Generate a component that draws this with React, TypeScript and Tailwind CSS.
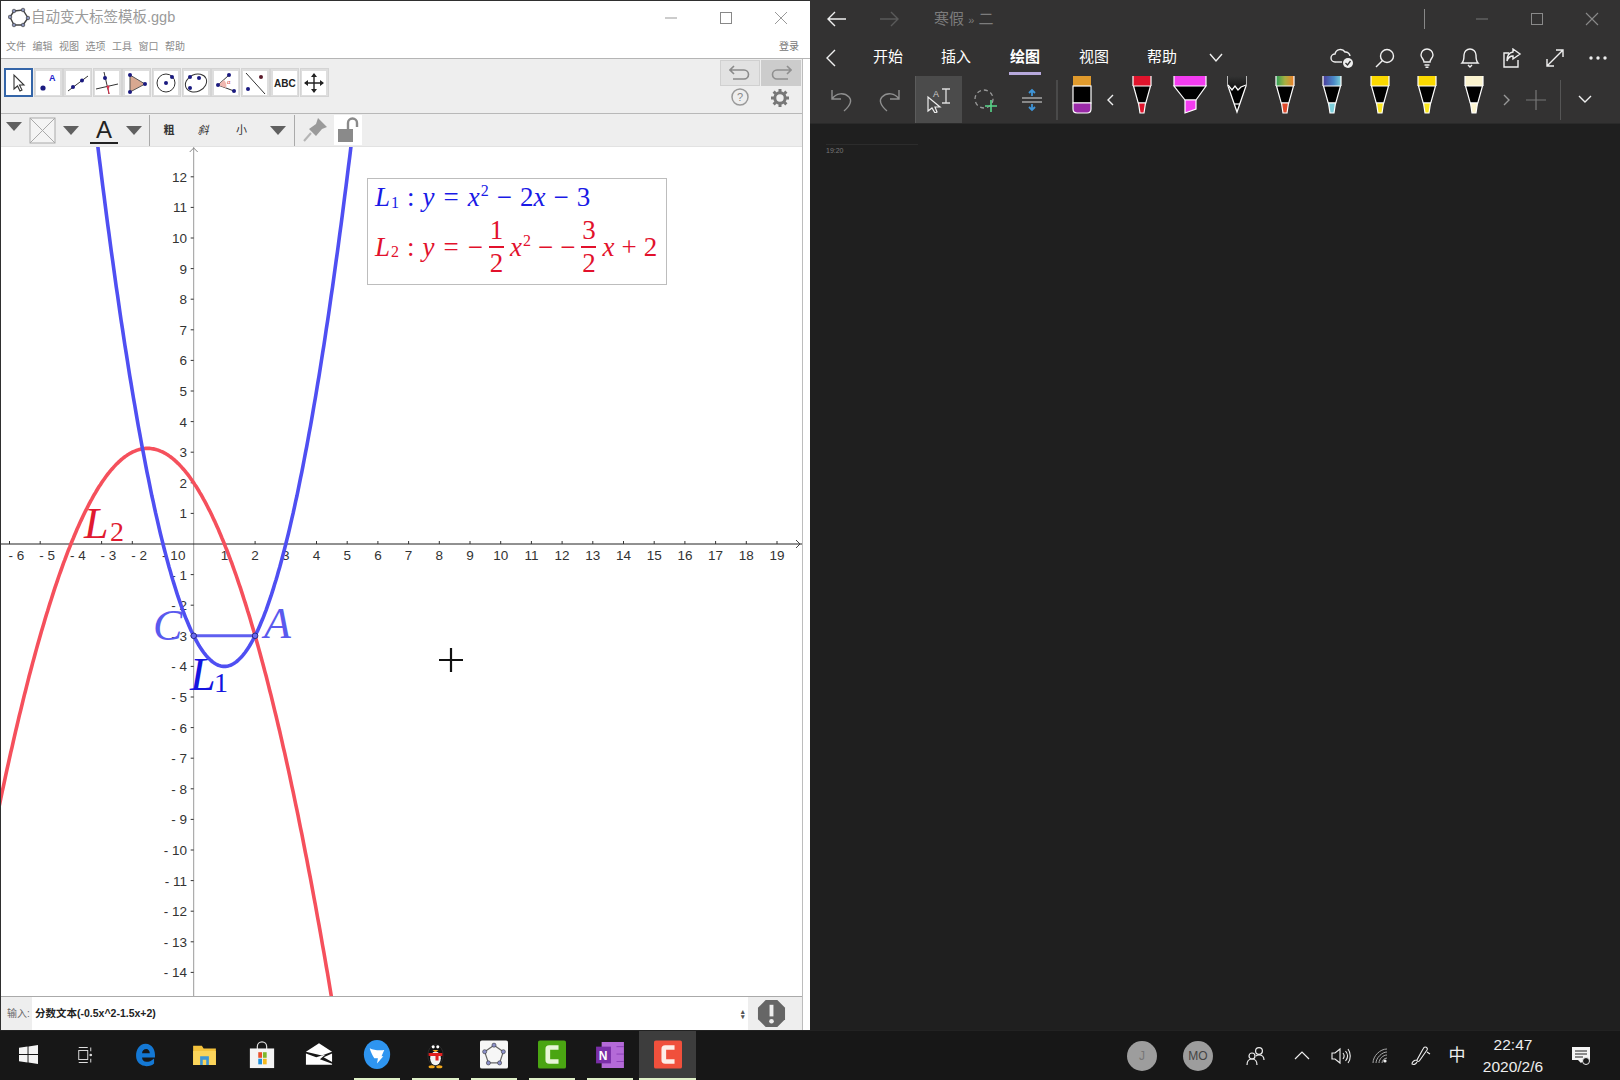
import React from "react";

const CJK = '"Liberation Sans","Noto Sans CJK SC",sans-serif';
const OX = 193.7, OY = 544, UX = 30.7, UY = 30.6;
const px = (x: number) => OX + x * UX;
const py = (y: number) => OY - y * UY;

function curve(f: (x: number) => number) {
  let d = "";
  for (let x = -6.4; x <= 19.8; x += 0.04) {
    const y = f(x);
    if (y > 14.5 || y < -15.5) { if (d && !d.endsWith("|")) d += "|"; continue; }
    d += (d === "" || d.endsWith("|") ? "M" : "L") + px(x).toFixed(1) + " " + py(y).toFixed(1) + " ";
  }
  return d.replace(/\|/g, "");
}

function Graph() {
  const xs: number[] = [];
  for (let i = -6; i <= 19; i++) if (i !== 0) xs.push(i);
  const ys: number[] = [];
  for (let i = -14; i <= 12; i++) if (i !== 0) ys.push(i);
  return (
    <svg viewBox="1 147 801 850" className="w-[801px] h-[850px] block" style={{ fontFamily: '"Liberation Sans",sans-serif' }}>
      <line x1={OX} y1="147" x2={OX} y2="997" stroke="#9a9a9a" />
      <line x1="0" y1={OY} x2="802" y2={OY} stroke="#222" />
      <path d={`M${OX - 4} 152 L${OX} 148 L${OX + 4} 152`} fill="none" stroke="#888" />
      <path d={`M796 ${OY - 4} L800 ${OY} L796 ${OY + 4}`} fill="none" stroke="#444" />
      {xs.map((i) => (
        <g key={i}>
          <line x1={px(i)} x2={px(i)} y1={OY - 3} y2={OY} stroke="#333" />
          {i < 0 ? (
            <text x={px(i) - 1} y={560} fontSize="13.5" fill="#333" xmlSpace="preserve">{`- ${-i}`}</text>
          ) : (
            <text x={px(i)} y={560} fontSize="13.5" fill="#333" textAnchor="middle">{i}</text>
          )}
        </g>
      ))}
      <text x="178" y="560" fontSize="13.5" fill="#333">0</text>
      {ys.map((i) => (
        <g key={i}>
          <line x1={OX - 3} x2={OX} y1={py(i)} y2={py(i)} stroke="#333" />
          <text x="187" y={py(i) + 5} fontSize="13.5" fill="#333" textAnchor="end" xmlSpace="preserve">{i < 0 ? `- ${-i}` : i}</text>
        </g>
      ))}
      <path d={curve((x) => -0.5 * x * x - 1.5 * x + 2)} fill="none" stroke="#f5505c" strokeWidth="3.6" />
      <path d={curve((x) => x * x - 2 * x - 3)} fill="none" stroke="#4f4ff2" strokeWidth="3.6" />
      <line x1={px(0)} x2={px(2)} y1={py(-3)} y2={py(-3)} stroke="#5f5ff0" strokeWidth="3" />
      <circle cx={px(0)} cy={py(-3)} r="2.8" fill="#6a6af0" stroke="#2a2a80" />
      <circle cx={px(2)} cy={py(-3)} r="2.8" fill="#6a6af0" stroke="#2a2a80" />
      <g style={{ fontFamily: '"Liberation Serif",serif' }}>
        <text x="153" y="640" fontSize="44" fontStyle="italic" fill="#5a5aee">C</text>
        <text x="264" y="638" fontSize="44" fontStyle="italic" fill="#5a5aee">A</text>
        <text x="190" y="690" fontSize="46" fontStyle="italic" fill="#1414e0">L</text>
        <text x="214" y="692" fontSize="28" fill="#1414e0">1</text>
        <text x="84" y="538" fontSize="44" fontStyle="italic" fill="#e01a30">L</text>
        <text x="110" y="541" fontSize="28" fill="#e01a30">2</text>
      </g>
      <path d="M439 660 H463 M451 648 V672" stroke="#111" strokeWidth="2.2" />
    </svg>
  );
}

function Frac({ n, c }: { n: string; c: string }) {
  return (
    <span className="inline-flex flex-col items-center mx-[5px] w-[17px] not-italic leading-[31px]">
      <span>{n}</span>
      <span className="block w-[15px] h-[1.5px]" style={{ backgroundColor: c }} />
      <span>2</span>
    </span>
  );
}

function Formula() {
  return (
    <div
      className="absolute left-[366px] top-[178px] w-[300px] h-[107px] border border-[#bdbdbd] bg-white pl-[7px] text-[27px] whitespace-nowrap"
      style={{ fontFamily: '"Liberation Serif",serif' }}
    >
      <div className="text-[#1a1ae6] flex items-center h-[37px]">
        <i>L</i><span className="text-[16px] mt-[10px] ml-[1px]">1</span>
        <span className="mx-[8px]">:</span><i>y</i><span className="mx-[9px]">=</span><i>x</i>
        <span className="text-[16px] -mt-[13px] ml-[1px]">2</span>
        <span className="mx-[8px]">−</span>2<i>x</i><span className="mx-[8px]">−</span>3
      </div>
      <div className="text-[#e2112c] flex items-center h-[62px]">
        <i>L</i><span className="text-[16px] mt-[10px] ml-[1px]">2</span>
        <span className="mx-[8px]">:</span><i>y</i><span className="mx-[9px]">=</span>−<Frac n="1" c="#e2112c" /><i>x</i>
        <span className="text-[16px] -mt-[13px] ml-[1px]">2</span>
        <span className="mx-[7px]">−</span>−<Frac n="3" c="#e2112c" /><i>x</i><span className="mx-[7px]">+</span>2
      </div>
    </div>
  );
}

function Tool({ sel, children }: { sel?: boolean; children: React.ReactNode }) {
  return (
    <div className={`w-[29px] h-[29px] mr-[0.6px] flex items-center justify-center ${sel ? "border-2 border-[#3465a8] bg-white" : "border border-[#d4d4d4] bg-[#dedede]"}`}>
      <svg width="24" height="24" viewBox="0 0 24 24" className="bg-white">{children}</svg>
    </div>
  );
}

const Dot = ({ x, y, c = "#1a1a80", r = 2 }: { x: number; y: number; c?: string; r?: number }) => <circle cx={x} cy={y} r={r} fill={c} />;

function Toolbar() {
  return (
    <div className="flex items-start pl-[3px] pt-[9px]">
      <Tool sel><path d="M7 4 L7 18 L10.5 15 L13 20 L15 19 L12.5 14 L17 14 Z" fill="#fff" stroke="#333" strokeWidth="1.1" /></Tool>
      <Tool><Dot x={7} y={17} r={2.6} /><text x="13" y="10" fontSize="9" fontWeight="bold" fill="#2222cc" fontFamily="Liberation Sans">A</text></Tool>
      <Tool><line x1="2" y1="20" x2="22" y2="5" stroke="#333" /><Dot x={7} y={16} /><Dot x={16} y={9.5} /></Tool>
      <Tool><line x1="9" y1="1" x2="14" y2="23" stroke="#333" /><line x1="1" y1="18" x2="23" y2="13" stroke="#333" /><Dot x={10} y={7} /><line x1="13" y1="16" x2="14" y2="23" stroke="#e0304c" /><Dot x={13} y={16} c="#e0304c" r={1.4} /></Tool>
      <Tool><path d="M5 4 L20 13 L5 21 Z" fill="#d8a890" stroke="#555" /><Dot x={5} y={4} /><Dot x={20} y={13} /><Dot x={5} y={21} /></Tool>
      <Tool><circle cx="12" cy="12" r="9" fill="none" stroke="#333" /><Dot x={12} y={12} /><Dot x={18} y={6} /></Tool>
      <Tool><ellipse cx="12" cy="12" rx="11" ry="8.5" transform="rotate(-25 12 12)" fill="none" stroke="#333" /><Dot x={6} y={6} /><Dot x={15} y={7} /><Dot x={6} y={17} /></Tool>
      <Tool><path d="M15 4 L4 14 L20 20" fill="none" stroke="#333" /><path d="M10 9 A8 8 0 0 1 12 17 L4 14 Z" fill="#f0b8b0" /><Dot x={15} y={4} /><Dot x={4} y={14} /><Dot x={20} y={20} /><text x="13" y="13" fontSize="6" fill="#d03030" fontFamily="Liberation Sans">α</text></Tool>
      <Tool><line x1="3" y1="2" x2="22" y2="23" stroke="#333" /><Dot x={18} y={6} c="#5a1a2a" /><Dot x={5} y={18} /></Tool>
      <Tool><text x="1" y="16" fontSize="10" fontWeight="bold" fill="#222" fontFamily="Liberation Sans">ABC</text></Tool>
      <Tool><path d="M12 3 V21 M3 12 H21" stroke="#222" strokeWidth="1.4" /><path d="M12 2 L9 6 H15 Z M12 22 L9 18 H15 Z M2 12 L6 9 V15 Z M22 12 L18 9 V15 Z" fill="#222" /></Tool>
    </div>
  );
}

const Tri = () => <div className="w-0 h-0 border-l-[8px] border-r-[8px] border-t-[9px] border-l-transparent border-r-transparent border-t-[#606060]" />;

function StyleBar() {
  return (
    <div className="h-[33px] flex items-center bg-[#eeeeee] text-[#333] text-[11px] border-b border-[#e2e2e2]" style={{ fontFamily: CJK }}>
      <div className="w-[26px] flex justify-center -mt-[8px]"><Tri /></div>
      <svg width="27" height="27" viewBox="0 0 27 27" className="ml-[2px]"><rect x="1" y="1" width="25" height="25" fill="#f4f4f4" stroke="#aaa" /><path d="M1 1 L26 26 M26 1 L1 26" stroke="#aaa" /></svg>
      <div className="w-[30px] flex justify-center"><Tri /></div>
      <div className="w-[34px] ml-[1px] flex flex-col items-center">
        <span className="text-[24px] leading-[25px] text-[#222]">A</span>
        <span className="w-[28px] h-[2px] bg-[#222]" />
      </div>
      <div className="w-[26px] flex justify-center"><Tri /></div>
      <div className="w-px h-[31px] bg-[#aaa] ml-[2px]" />
      <div className="w-[36px] ml-[1px] text-center font-bold">粗</div>
      <div className="w-[30px] ml-[1px] text-center italic">斜</div>
      <div className="w-[47px] text-center">小</div>
      <div className="w-[26px] flex justify-center"><Tri /></div>
      <div className="w-px h-[31px] bg-[#aaa] ml-[3px]" />
      <svg width="28" height="28" viewBox="0 0 28 28" className="ml-[6px]"><path d="M17 2 L26 11 L21 13 L15 20 L8 13 L15 8 Z" fill="#9a9a9a" /><path d="M10 17 L3 25" stroke="#b5b5b5" strokeWidth="2" /></svg>
      <div className="w-[28px] h-[30px] bg-white flex items-center justify-center ml-[5px]">
        <svg width="24" height="26" viewBox="0 0 24 26"><rect x="2" y="12" width="15" height="13" fill="#8a8a8a" /><path d="M12 12 V6 A4.5 4.5 0 0 1 21 6 V10" fill="none" stroke="#8a8a8a" strokeWidth="2.4" /></svg>
      </div>
    </div>
  );
}

function LeftWindow() {
  return (
    <div className="w-[810px] h-full flex flex-col bg-white border-l border-t border-[#2f2f2f] shrink-0 overflow-hidden" style={{ fontFamily: CJK }}>
      <div className="h-[33px] flex items-center shrink-0">
        <svg width="22" height="22" viewBox="0 0 22 22" className="ml-[7px]"><path d="M6 4 L15 3 L20 11 L15 18 L6 18 L2 10 Z" fill="none" stroke="#444" strokeWidth="1.4" /><g fill="#8a93b8" stroke="#333" strokeWidth="0.6"><circle cx="6" cy="4" r="1.8" /><circle cx="15" cy="3" r="1.8" /><circle cx="20" cy="11" r="1.8" /><circle cx="15" cy="18" r="1.8" /><circle cx="6" cy="18" r="1.8" /><circle cx="2" cy="10" r="1.8" /></g></svg>
        <span className="ml-[1px] text-[14.5px] text-[#9a9a9a]">自动变大标签模板.ggb</span>
        <div className="ml-auto flex items-center text-[#888]">
          <svg width="14" height="14" viewBox="0 0 14 14" className="mr-[41px]"><path d="M1 7 H13" stroke="#999" /></svg>
          <svg width="14" height="14" viewBox="0 0 14 14" className="mr-[41px]"><rect x="1.5" y="1.5" width="11" height="11" fill="none" stroke="#888" /></svg>
          <svg width="14" height="14" viewBox="0 0 14 14" className="mr-[22px]"><path d="M1 1 L13 13 M13 1 L1 13" stroke="#999" /></svg>
        </div>
      </div>
      <div className="h-[25px] flex items-center shrink-0 border-b border-[#b5b5b5] pl-[5px] pr-[11px] text-[10px] text-[#8a8a8a] gap-[6.5px]">
        {["文件", "编辑", "视图", "选项", "工具", "窗口", "帮助"].map((t) => <span key={t}>{t}</span>)}
        <span className="ml-auto text-[#777]">登录</span>
      </div>
      <div className="flex flex-1 min-h-0">
        <div className="w-[802px] flex flex-col border-r border-[#bcbcbc]">
          <div className="h-[55px] flex justify-between bg-[#eeeeee] border-b border-[#b8b8b8] shrink-0">
            <Toolbar />
            <div className="flex flex-col w-[82px] pt-[1px]">
              <div className="flex gap-px h-[26px]">
                <div className="w-[40px] bg-[#e2e2e2] border border-[#d0d0d0] flex items-center justify-center">
                  <svg width="22" height="16" viewBox="0 0 22 16"><path d="M5 1 L1 5 L5 9 M1 5 H15 A4.5 4.5 0 0 1 15 14 H4" fill="none" stroke="#8a8a8a" strokeWidth="1.6" /></svg>
                </div>
                <div className="w-[40px] bg-[#cccccc] flex items-center justify-center">
                  <svg width="22" height="16" viewBox="0 0 22 16"><path d="M17 1 L21 5 L17 9 M21 5 H7 A4.5 4.5 0 0 0 7 14 H18" fill="none" stroke="#8f8f8f" strokeWidth="1.6" /></svg>
                </div>
              </div>
              <div className="flex mt-[2px]">
                <div className="w-[40px] flex justify-center">
                  <svg width="18" height="18" viewBox="0 0 18 18"><circle cx="9" cy="9" r="8" fill="none" stroke="#999" strokeWidth="1.5" /><text x="9" y="13" textAnchor="middle" fontSize="11" fill="#888" fontFamily="Liberation Sans">?</text></svg>
                </div>
                <div className="w-[40px] flex justify-center">
                  <svg width="20" height="20" viewBox="0 0 20 20"><circle cx="10" cy="10" r="5.2" fill="none" stroke="#777" strokeWidth="3" /><g stroke="#777" strokeWidth="3"><path d="M10 1 V4 M10 16 V19 M1 10 H4 M16 10 H19 M3.6 3.6 L5.8 5.8 M14.2 14.2 L16.4 16.4 M3.6 16.4 L5.8 14.2 M14.2 5.8 L16.4 3.6" /></g></svg>
                </div>
              </div>
            </div>
          </div>
          <StyleBar />
          <div className="relative h-[850px] bg-white shrink-0 border-b border-[#aaa] overflow-hidden">
            <div className="w-[801px] h-[850px] absolute left-0 top-0"><Graph /></div>
            <div className="absolute left-0 -top-[147px] w-0 h-0"><Formula /></div>
          </div>
          <div className="flex-1 flex items-center bg-[#eeeeee] min-h-0">
            <span className="w-[31px] pl-[6px] text-[10px] text-[#666] whitespace-nowrap">输入:</span>
            <div className="w-[716px] h-full bg-white flex items-center justify-between pl-[3px] pr-[3px] text-[10.5px] font-bold text-[#222]">
              <span>分数文本(-0.5x^2-1.5x+2)</span>
              <span className="text-[7px] leading-[5px] text-[#555] flex flex-col"><span>▴</span><span>▾</span></span>
            </div>
            <div className="flex-1 flex justify-center pr-[7px]">
              <svg width="29" height="29" viewBox="0 0 30 30"><path d="M9 1 H21 L29 9 V21 L21 29 H9 L1 21 V9 Z" fill="#666" /><path d="M15 6 V18" stroke="#eee" strokeWidth="4" /><circle cx="15" cy="23" r="2.4" fill="#eee" /></svg>
            </div>
          </div>
        </div>
        <div className="flex-1 bg-white" />
      </div>
    </div>
  );
}

function Pen({ cap, tip, pencil }: { cap: string; tip: string; pencil?: boolean }) {
  return (
    <svg width="24" height="40" viewBox="0 0 24 40">
      {pencil ? (
        <>
          <defs><linearGradient id="pc" x1="0" y1="0" x2="0" y2="1"><stop offset="0" stopColor="#333" /><stop offset="1" stopColor="#111" /></linearGradient></defs>
          <path d="M3 1 V11 L12 37 L21 11 V1" fill="#000" stroke="#fff" strokeWidth="1.3" />
          <path d="M3 11 L7 15 L10 11 L13 15 L16 12 L21 11 L21 1 L3 1 Z" fill="url(#pc)" />
          <path d="M3 10 L7 15 L10 11 L13 15 L16 12 L21 10" fill="none" stroke="#fff" strokeWidth="1.3" />
          <path d="M9 29 H15" stroke="#fff" strokeWidth="1.2" />
        </>
      ) : (
        <>
          <rect x="3" y="1" width="18" height="10" fill={cap} />
          <path d="M3 1 V11 M21 1 V11" stroke="#fff" strokeWidth="1.2" />
          <path d="M3.5 11 H20.5 L15.8 28 H8.2 Z" fill="#000" stroke="#fff" strokeWidth="1.2" />
          <path d="M8.5 28 H15.5 L14 38 H10 Z" fill={tip} stroke="#fff" strokeWidth="1.2" />
        </>
      )}
    </svg>
  );
}

const D = ({ c, children, cls = "" }: { c: string; children?: React.ReactNode; cls?: string }) => (
  <div className={`${c} h-full flex items-center justify-center shrink-0 ${cls}`}>{children}</div>
);

function RightWindow() {
  const I = { fill: "none", stroke: "#f0f0f0", strokeWidth: 1.4 } as const;
  return (
    <div className="flex-1 h-full flex flex-col bg-[#1f1f1f] text-white" style={{ fontFamily: CJK }}>
      <div className="h-[124px] bg-[#333232] shrink-0 flex flex-col border-b border-[#2a2a2a]">
        <div className="h-[38px] flex items-center">
          <D c="w-[54px]"><svg width="20" height="16" viewBox="0 0 20 16"><path d="M8 1 L1 8 L8 15 M1 8 H19" {...I} /></svg></D>
          <D c="w-[50px]"><svg width="20" height="16" viewBox="0 0 20 16"><path d="M12 1 L19 8 L12 15 M19 8 H1" fill="none" stroke="#5a5a5a" strokeWidth="1.4" /></svg></D>
          <span className="ml-[20px] text-[15px] text-[#7c7c7c] whitespace-nowrap">寒假 <span className="text-[11px]">»</span> 二</span>
          <div className="w-px h-[20px] bg-[#888] ml-auto mr-[50px]" />
          <svg width="14" height="14" viewBox="0 0 14 14" className="mr-[41px]"><path d="M1 7 H13" stroke="#777" /></svg>
          <svg width="14" height="14" viewBox="0 0 14 14" className="mr-[41px]"><rect x="1.5" y="1.5" width="11" height="11" fill="none" stroke="#8a8a8a" /></svg>
          <svg width="14" height="14" viewBox="0 0 14 14" className="mr-[21px]"><path d="M1 1 L13 13 M13 1 L1 13" stroke="#8a8a8a" strokeWidth="1.1" /></svg>
        </div>
        <div className="h-[38px] pt-[1px] flex items-center text-[15px]">
          <D c="w-[42px]"><svg width="12" height="18" viewBox="0 0 12 18"><path d="M10 1 L2 9 L10 17" {...I} /></svg></D>
          <D c="w-[72px]">开始</D>
          <D c="w-[64px]">插入</D>
          <D c="w-[74px] relative font-bold">绘图<span className="absolute left-[21px] bottom-[1px] w-[32px] h-[3px] bg-[#b7a9dc]" /></D>
          <D c="w-[64px]">视图</D>
          <D c="w-[72px]">帮助</D>
          <D c="w-[36px]"><svg width="16" height="10" viewBox="0 0 16 10"><path d="M2 1 L8 8 L14 1" {...I} /></svg></D>
          <div className="ml-auto flex h-full mr-[1px]">
            <D c="w-[43px]"><svg width="24" height="22" viewBox="0 0 24 22"><path d="M6 15 H5 A4 4 0 0 1 5 7 A5.5 5.5 0 0 1 15 5 A4.5 4.5 0 0 1 20 9" {...I} /><path d="M6 15 H12" {...I} /><circle cx="18" cy="16" r="5" fill="#eee" /><path d="M15.5 16 L17.5 18 L20.5 14" fill="none" stroke="#333" strokeWidth="1.3" /></svg></D>
            <D c="w-[43px]"><svg width="20" height="20" viewBox="0 0 20 20"><circle cx="12" cy="8" r="6.5" {...I} /><path d="M7.5 12.5 L1 19" {...I} /></svg></D>
            <D c="w-[42px]"><svg width="16" height="20" viewBox="0 0 16 20"><path d="M5 14 C5 11 2 10 2 7 A6 6 0 0 1 14 7 C14 10 11 11 11 14 Z M5.5 17 H10.5 M6.5 19.2 H9.5" {...I} /></svg></D>
            <D c="w-[43px]"><svg width="20" height="20" viewBox="0 0 20 20"><path d="M2 15 C4 13 4 11 4 7 A6 6 0 0 1 16 7 C16 11 16 13 18 15 Z M8 17 L10 19 L12 17" {...I} /></svg></D>
            <D c="w-[42px]"><svg width="20" height="20" viewBox="0 0 20 20"><path d="M7 5 H2 V19 H16 V12" {...I} /><path d="M11 1 L18 6 L11 11 V8 C8 8 6 10 5 13 C5 8 7 4.5 11 4 Z" {...I} /></svg></D>
            <D c="w-[43px]"><svg width="20" height="20" viewBox="0 0 20 20"><path d="M2 18 L18 2 M11 2 H18 V9 M2 11 V18 H9" {...I} /></svg></D>
            <D c="w-[43px]"><svg width="20" height="6" viewBox="0 0 20 6"><circle cx="3" cy="3" r="1.7" fill="#eee" /><circle cx="10" cy="3" r="1.7" fill="#eee" /><circle cx="17" cy="3" r="1.7" fill="#eee" /></svg></D>
          </div>
        </div>
        <div className="flex-1 flex items-center min-h-0">
          <D c="w-[64px]"><svg width="24" height="24" viewBox="0 0 24 24"><path d="M2 2 V11 H11 M2 11 C6 5 14 4 19 9 C22 12 21 17 14 23" fill="none" stroke="#8f8f8f" strokeWidth="1.4" /></svg></D>
          <D c="w-[30px]"><svg width="24" height="24" viewBox="0 0 24 24"><path d="M22 2 V11 H13 M22 11 C18 5 10 4 5 9 C2 12 3 17 10 23" fill="none" stroke="#8f8f8f" strokeWidth="1.4" /></svg></D>
          <D c="w-[47px] ml-[11px] bg-[#4b4b4b] border-l border-[#5c5c5c]">
            <svg width="26" height="26" viewBox="0 0 26 26"><path d="M2 10 V24 L6 21 L9 26 L11 25 L9 20 L14 20 Z" fill="none" stroke="#eee" strokeWidth="1.2" /><text x="7" y="10" fontSize="9" fill="#ccc" fontFamily="Liberation Sans">A</text><path d="M16 2 H24 M20 2 V16 M16 16 H24" stroke="#ddd" strokeWidth="1.3" /></svg>
          </D>
          <D c="w-[46px]"><svg width="26" height="26" viewBox="0 0 26 26"><circle cx="12" cy="12" r="9" fill="none" stroke="#999" strokeWidth="1.3" strokeDasharray="4 3" /><path d="M19 13 V25 M13 19 H25" stroke="#58d68a" strokeWidth="1.6" /></svg></D>
          <D c="w-[48px]"><svg width="22" height="24" viewBox="0 0 22 24"><path d="M1 10 H21 M1 14 H21" stroke="#ddd" strokeWidth="1.2" /><path d="M11 8 V2 M8 5 L11 2 L14 5 M11 16 V22 M8 19 L11 22 L14 19" fill="none" stroke="#3f95d8" strokeWidth="1.8" /></svg></D>
          <div className="w-[2px] h-[40px] bg-[#4a4a4a] shrink-0" />
          <D c="w-[48px]" cls="pb-[9px]"><svg width="22" height="40" viewBox="0 0 22 40"><rect x="2" y="1" width="18" height="10" fill="#e09a2c" /><rect x="2" y="11" width="18" height="17" fill="#000" stroke="#fff" strokeWidth="1.2" /><path d="M2 28 H20 V34 Q20 38 16 38 H6 Q2 38 2 34 Z" fill="#9a2aa8" stroke="#fff" strokeWidth="1.2" /></svg></D>
          <D c="w-[10px]"><svg width="8" height="12" viewBox="0 0 8 12"><path d="M6 1 L1 6 L6 11" {...I} /></svg></D>
          <D c="w-[52px]" cls="pb-[9px]"><Pen cap="#e0142c" tip="#e0142c" /></D>
          <D c="w-[44px]" cls="pb-[9px]"><svg width="36" height="40" viewBox="0 0 36 40"><rect x="2" y="1" width="32" height="10" fill="#f33cf0" /><path d="M2 1 V11 M34 1 V11" fill="none" stroke="#fff" strokeWidth="1.2" /><path d="M2 11 H34 L24 25 H13 Z" fill="#000" stroke="#fff" strokeWidth="1.2" /><path d="M13 25 H24 V34 L13 38 Z" fill="#f33cf0" stroke="#fff" strokeWidth="1.2" /></svg></D>
          <D c="w-[50px]" cls="pb-[9px]"><Pen cap="" tip="" pencil /></D>
          <D c="w-[46px]" cls="pb-[9px]"><svg width="24" height="40" viewBox="0 0 24 40"><defs><linearGradient id="r1" x1="0" x2="1" y1="0" y2="0"><stop offset="0" stopColor="#2aa05a" /><stop offset="0.5" stopColor="#a8b040" /><stop offset="1" stopColor="#f0802c" /></linearGradient></defs><rect x="3" y="1" width="18" height="10" fill="url(#r1)" /><path d="M3.5 11 H20.5 L15.8 28 H8.2 Z" fill="#000" stroke="#fff" strokeWidth="1.2" /><path d="M8.5 28 H15.5 L14 38 H10 Z" fill="#e04a2c" stroke="#fff" strokeWidth="1.2" /><path d="M3 1 V11 M21 1 V11" stroke="#fff" strokeWidth="1.2" /></svg></D>
          <D c="w-[48px]" cls="pb-[9px]"><svg width="24" height="40" viewBox="0 0 24 40"><defs><linearGradient id="r2" x1="0" x2="1" y1="0" y2="0"><stop offset="0" stopColor="#4a3a9a" /><stop offset="0.6" stopColor="#4a8ac8" /><stop offset="1" stopColor="#7ad0d8" /></linearGradient></defs><rect x="3" y="1" width="18" height="10" fill="url(#r2)" /><path d="M3.5 11 H20.5 L15.8 28 H8.2 Z" fill="#000" stroke="#fff" strokeWidth="1.2" /><path d="M8.5 28 H15.5 L14 38 H10 Z" fill="#7ed0dc" stroke="#fff" strokeWidth="1.2" /><path d="M3 1 V11 M21 1 V11" stroke="#fff" strokeWidth="1.2" /></svg></D>
          <D c="w-[47px]" cls="pb-[9px]"><Pen cap="#fbd900" tip="#fbe61e" /></D>
          <D c="w-[48px]" cls="pb-[9px]"><Pen cap="#fbd900" tip="#fbe61e" /></D>
          <D c="w-[46px]" cls="pb-[9px]"><Pen cap="#fbf3cf" tip="#fbf3cf" /></D>
          <D c="w-[18px]"><svg width="8" height="12" viewBox="0 0 8 12"><path d="M2 1 L7 6 L2 11" fill="none" stroke="#999" strokeWidth="1.4" /></svg></D>
          <D c="w-[42px]"><svg width="22" height="22" viewBox="0 0 22 22"><path d="M11 1 V21 M1 11 H21" stroke="#777" strokeWidth="1.2" /></svg></D>
          <div className="w-px h-[40px] bg-[#555] ml-[3px] shrink-0" />
          <D c="w-[48px]"><svg width="14" height="9" viewBox="0 0 14 9"><path d="M1 1 L7 7 L13 1" {...I} /></svg></D>
        </div>
      </div>
      <div className="pl-[16px] pt-[20px]">
        <div className="w-[92px] h-px bg-[#2c2c2c] mb-[1px]" />
        <span className="text-[7px] text-[#777] block leading-[9px]">19:20</span>
      </div>
    </div>
  );
}

function TBIcon({ w, line, active, children }: { w: string; line?: boolean; active?: boolean; children: React.ReactNode }) {
  return (
    <div className={`${w} h-full flex flex-col shrink-0 ${active ? "bg-[#3d3d3d]" : ""}`}>
      <div className="flex-1 flex items-center justify-center">{children}</div>
      <div className={`h-[2px] ${line ? (active ? "bg-[#dff0c8]" : "mx-[6px] bg-[#dff0c8]") : ""}`} />
    </div>
  );
}

function Taskbar() {
  return (
    <div className="h-[50px] bg-[#171717] flex items-stretch text-[#eee] shrink-0 border-t border-[#222]" style={{ fontFamily: CJK }}>
      <TBIcon w="w-[56px]"><svg width="19" height="19" viewBox="0 0 20 20"><path d="M0 3 L9 1.7 V9.5 H0 Z M10 1.5 L20 0 V9.5 H10 Z M0 10.5 H9 V18.3 L0 17 Z M10 10.5 H20 V20 L10 18.5 Z" fill="#f4f4f4" /></svg></TBIcon>
      <TBIcon w="w-[59px]"><svg width="19" height="18" viewBox="0 0 22 24"><path d="M2 2 H14 M2 22 H14" stroke="#ddd" strokeWidth="1.4" /><rect x="2" y="6" width="12" height="12" fill="none" stroke="#ddd" strokeWidth="1.3" /><circle cx="18" cy="12" r="1.8" fill="#ddd" /><path d="M18 2 V7 M18 17 V22" stroke="#ddd" strokeWidth="1.3" /></svg></TBIcon>
      <TBIcon w="w-[60px]"><svg width="23" height="24" viewBox="0 0 24 28"><path d="M12 1 C5 1 1 8 1 15 C1 23 7 27 13 27 C17 27 20 26 22 24 V18 C19 21 16 22 13 22 C10 22 8 20 8 17 H23 C24 9 20 1 12 1 Z M8 12 C8 9 10 7 13 7 C15 7 17 9 17 12 Z" fill="#1478d4" /></svg></TBIcon>
      <TBIcon w="w-[58px]"><svg width="25" height="21" viewBox="0 0 26 24"><path d="M0 2 H10 L12 5 H26 V24 H0 Z" fill="#f4c23c" /><rect x="0" y="8" width="26" height="16" fill="#fbd45a" /><rect x="8" y="14" width="10" height="10" fill="#3d96d8" /><rect x="11" y="18" width="4" height="6" fill="#fbd45a" /></svg></TBIcon>
      <TBIcon w="w-[57px]"><svg width="28" height="28" viewBox="0 0 28 30"><path d="M9 9 V6 A5 5 0 0 1 19 6 V9" fill="none" stroke="#ddd" strokeWidth="1.3" /><rect x="1" y="8" width="26" height="21" fill="#f4f4f4" /><rect x="10" y="12" width="4" height="6" fill="#e8502c" /><rect x="15" y="12" width="4" height="6" fill="#7fb82c" /><rect x="10" y="19" width="4" height="6" fill="#1e90dc" /><rect x="15" y="19" width="4" height="6" fill="#f4b81c" /></svg></TBIcon>
      <TBIcon w="w-[58px]"><svg width="28" height="23" viewBox="0 0 30 24"><path d="M1 9 L15 0 L29 9 L18 13 Z" fill="#fff" /><path d="M1 11 L12 15 L22 12 L16 17 L29 22 V23 H1 Z M29 11 V20 L20 15 Z" fill="#fff" /></svg></TBIcon>
      <TBIcon w="w-[58px]" line><svg width="28" height="29" viewBox="0 0 30 32"><ellipse cx="15" cy="16" rx="14.5" ry="16" fill="#2e95f0" /><path d="M7 9 C11 11 17 12 23 11 L20 18 L22 18 L15 26 L16 20 L12 20 C10 17 8 13 7 9 Z" fill="#fff" /></svg></TBIcon>
      <TBIcon w="w-[59px]" line><svg width="23" height="29" viewBox="0 0 26 38"><ellipse cx="13" cy="20" rx="10" ry="14" fill="#111" stroke="#333" /><ellipse cx="13" cy="24" rx="7" ry="9" fill="#f4f4f4" /><circle cx="10" cy="9" r="2" fill="#fff" /><circle cx="16" cy="9" r="2" fill="#fff" /><path d="M9 13 H17 L13 16 Z" fill="#f4a81c" /><path d="M4 17 H22 V21 H17 V27 H13 V21 H4 Z" fill="#e02020" /><ellipse cx="8" cy="35" rx="4" ry="2" fill="#f4a81c" /><ellipse cx="18" cy="35" rx="4" ry="2" fill="#f4a81c" /></svg></TBIcon>
      <TBIcon w="w-[58px]" line><svg width="28" height="29" viewBox="0 0 30 30"><rect width="30" height="30" rx="2" fill="#f6f6f6" /><path d="M15 5 L25 12 L21 24 H9 L5 12 Z" fill="none" stroke="#666" strokeWidth="1.3" /><g fill="#8a8fc8" stroke="#333" strokeWidth="0.6"><circle cx="15" cy="5" r="2.2" /><circle cx="25" cy="12" r="2.2" /><circle cx="21" cy="24" r="2.2" /><circle cx="9" cy="24" r="2.2" /><circle cx="5" cy="12" r="2.2" /></g></svg></TBIcon>
      <TBIcon w="w-[58px]" line><svg width="28" height="29" viewBox="0 0 30 30"><rect width="30" height="30" rx="2" fill="#4aa512" /><path d="M22 5 H12 Q8 5 8 9 V21 Q8 25 12 25 H22 V20 H13 V10 H22 Z" fill="#e8f5d8" /></svg></TBIcon>
      <TBIcon w="w-[58px]" line><svg width="28" height="26" viewBox="0 0 30 28"><rect x="6" y="0" width="24" height="28" fill="#b46ad8" /><rect x="0" y="5" width="16" height="18" fill="#7a2fa8" /><text x="3" y="19" fontSize="13" fontWeight="bold" fill="#fff" fontFamily="Liberation Sans">N</text><path d="M22 5 H30 M22 13 H30 M22 21 H30" stroke="#8a3fb8" strokeWidth="1" /></svg></TBIcon>
      <TBIcon w="w-[57px]" line active><svg width="28" height="29" viewBox="0 0 30 30"><rect width="30" height="30" rx="2" fill="#f0503c" /><path d="M22 5 H12 Q8 5 8 9 V21 Q8 25 12 25 H22 V20 H13 V10 H22 Z" fill="#fdeee8" /></svg></TBIcon>
      <div className="ml-auto flex h-full mr-[16px]">
        <D c="w-[56px]"><div className="w-[30px] h-[30px] rounded-full bg-[#9d9d9d] flex items-center justify-center text-[12px] text-[#777]">J</div></D>
        <D c="w-[56px]"><div className="w-[30px] h-[30px] rounded-full bg-[#9d9d9d] flex items-center justify-center text-[12px] text-[#444]">MO</div></D>
        <D c="w-[60px]"><svg width="20" height="20" viewBox="0 0 20 20"><circle cx="13" cy="5" r="3.4" fill="none" stroke="#eee" strokeWidth="1.2" /><circle cx="6" cy="10" r="3" fill="none" stroke="#eee" strokeWidth="1.2" /><path d="M1 19 C1 15 3 13 6 13 C9 13 11 15 11 19 M10 10 C11 9 12 9 13 9 C16 9 18 11 18 14" fill="none" stroke="#eee" strokeWidth="1.2" /></svg></D>
        <D c="w-[32px]"><svg width="16" height="9" viewBox="0 0 16 9"><path d="M1 8 L8 1 L15 8" fill="none" stroke="#eee" strokeWidth="1.2" /></svg></D>
        <D c="w-[46px]"><svg width="20" height="18" viewBox="0 0 20 18"><path d="M1 6 H4 L9 2 V16 L4 12 H1 Z M12 6 C13.5 8 13.5 10 12 12 M14.5 4 C17 7 17 11 14.5 14 M17 2 C20 6 20 12 17 16" fill="none" stroke="#eee" strokeWidth="1.1" /></svg></D>
        <D c="w-[32px]"><svg width="16" height="16" viewBox="0 0 16 16"><path d="M1 15 C1 8 8 1 15 1 M4 15 C4 10 10 4 15 4 M7 15 C7 11 11 7 15 7 M10 15 C10 13 12 10 15 10" fill="none" stroke="#aaa" strokeWidth="1" /><circle cx="13" cy="13" r="1.6" fill="#eee" /></svg></D>
        <D c="w-[50px]"><svg width="20" height="20" viewBox="0 0 20 20"><path d="M14 1 C16 1 17 3 16 4 L9 14 C8 16 6 16 6 14 L12 3 C12.5 2 13 1 14 1 Z M6 14 C3 14 1 16 1 18 C3 19 5 18 6 16 M16 6 L19 8" fill="none" stroke="#eee" strokeWidth="1.1" /></svg></D>
        <D c="w-[22px]" cls="text-[17px]">中</D>
        <D c="w-[90px]" cls="flex-col text-[15.5px] leading-[22px] pt-[1px]"><span>22:47</span><span>2020/2/6</span></D>
        <D c="w-[46px]"><svg width="20" height="20" viewBox="0 0 20 20"><path d="M1 1 H19 V14 H13 L10 17 L7 14 H1 Z" fill="#f4f4f4" /><path d="M4 5 H16 M4 8 H16 M4 11 H12" stroke="#222" /><circle cx="15" cy="15" r="3.5" fill="#171717" stroke="#eee" /></svg></D>
      </div>
    </div>
  );
}

export default function App() {
  return (
    <div className="w-[1620px] h-[1080px] flex flex-col bg-[#1f1f1f] overflow-hidden">
      <div className="h-[1030px] flex min-h-0 shrink-0">
        <LeftWindow />
        <RightWindow />
      </div>
      <Taskbar />
    </div>
  );
}
